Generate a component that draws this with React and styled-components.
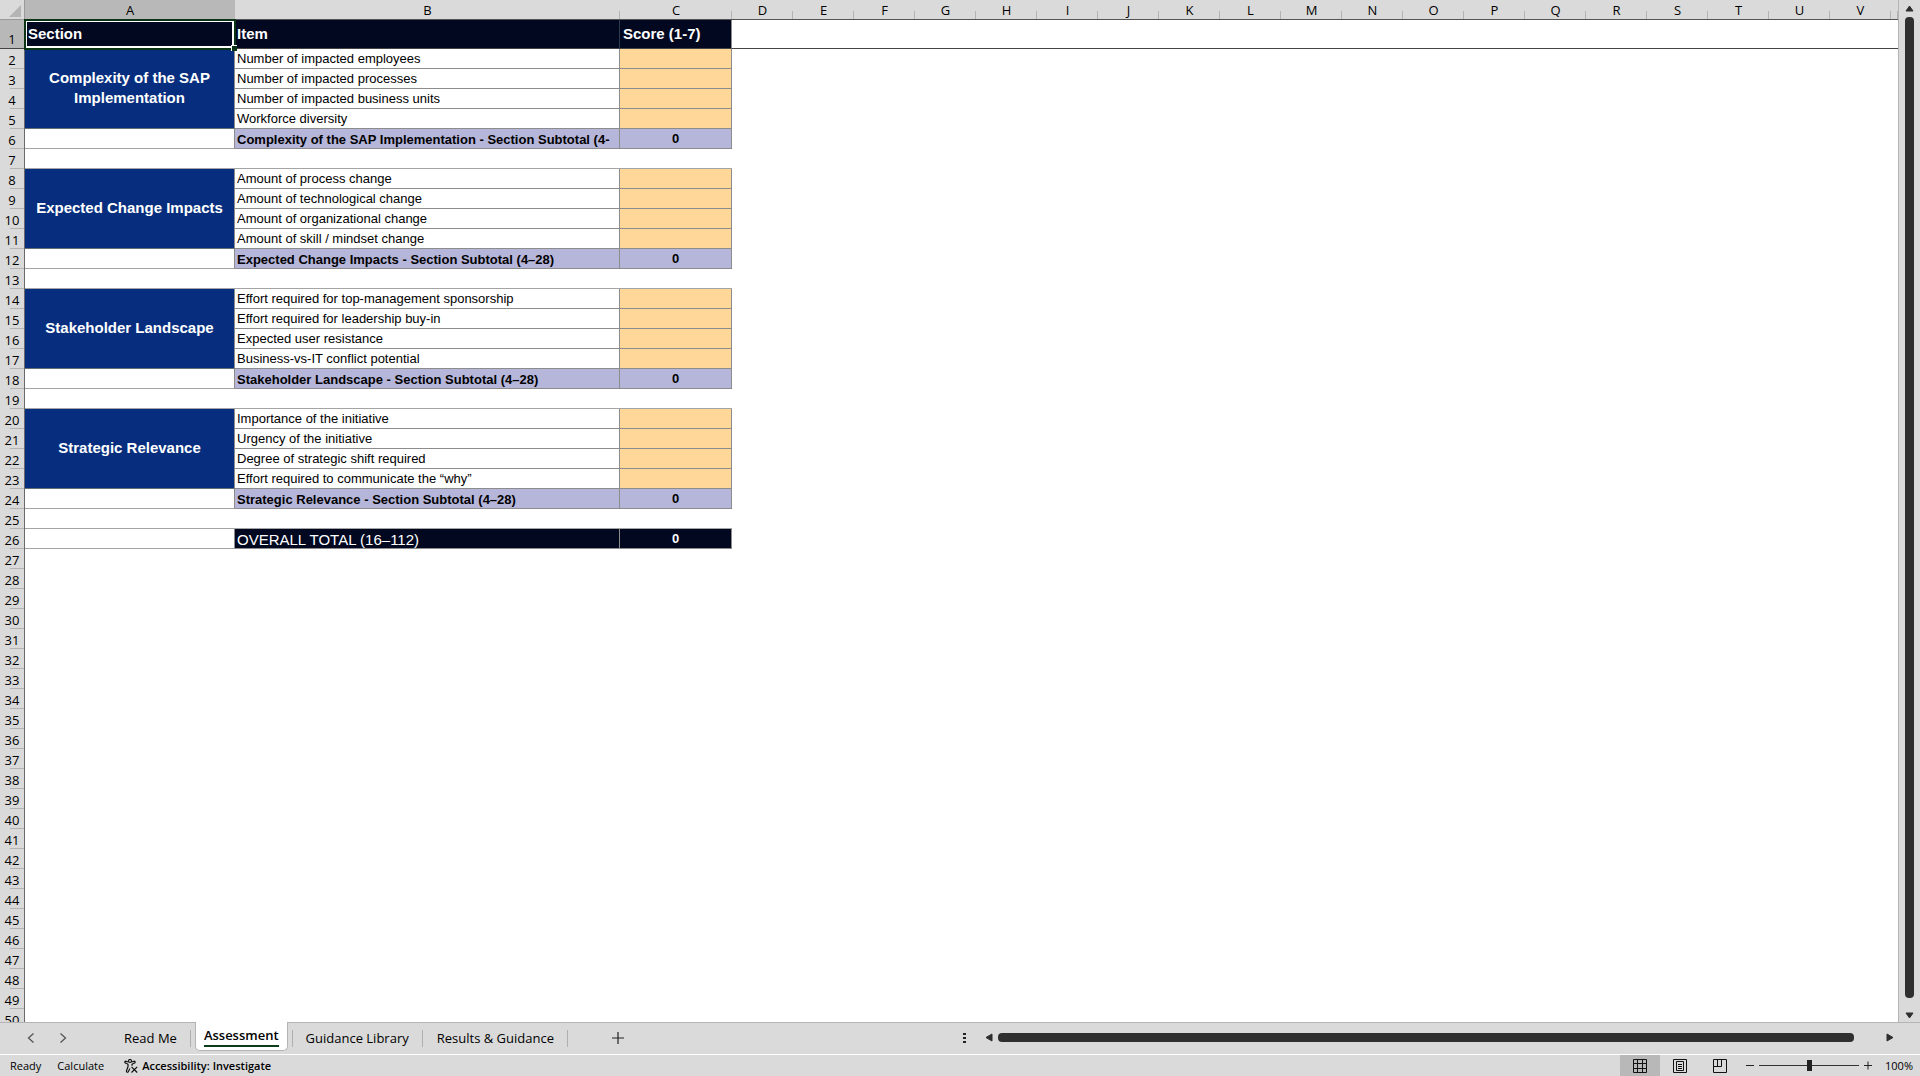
import React from "react";
import styled, { createGlobalStyle, css } from "styled-components";

const GlobalStyle = createGlobalStyle`
  * {
    box-sizing: border-box;
  }

  body {
    margin: 0;
    background: #dadada;
    color: #000;
    font-family: "Open Sans", "Noto Sans", sans-serif;
  }

  button {
    border: 0;
    padding: 0;
    background: none;
    color: inherit;
    font-family: inherit;
    display: flex;
    align-items: center;
    justify-content: center;
    cursor: pointer;
  }
`;

const Workbook = styled.div`
  display: flex;
  flex-direction: column;
  height: 100vh;
  overflow: hidden;
`;

const SheetArea = styled.div`
  display: flex;
  flex: 1;
  min-height: 0;
  border-bottom: 1px solid #b4b4b4;
`;

const SheetView = styled.main`
  flex: 1;
  min-width: 0;
  overflow: hidden;
  background: #fff;
  border-right: 1px solid #b4b4b4;
`;

const Sheet = styled.table`
  width: 100%;
  table-layout: fixed;
  border-collapse: separate;
  border-spacing: 0;
  font-family: "Liberation Sans", Arial, sans-serif;
  font-size: 13px;
  line-height: 17px;

  tr {
    height: 20px;
  }

  tr.first {
    height: 29px;
  }

  th,
  td {
    padding: 2px 0 0;
    overflow: hidden;
    white-space: nowrap;
    text-align: left;
  }
`;

const Col = styled.col`
  width: ${(p) => (p.$width ? `${p.$width}px` : "auto")};
`;

const headerFont = css`
  font-family: "Open Sans", "Noto Sans", sans-serif;
  font-size: 13px;
  font-weight: 500;
  color: #000;
`;

const Corner = styled.th`
  background: #dadada;
  border-bottom: 1px solid #9a9a9a;
  border-right: 1px solid #9a9a9a;

  svg {
    display: block;
    margin-left: 9px;
  }
`;

const ColHead = styled.th`
  && {
    ${headerFont}
    text-align: center;
  }
  background: ${(p) =>
    p.$active
      ? "#b8b8b8"
      : "linear-gradient(#b4b4b4, #b4b4b4) right bottom / 1px 8px no-repeat #dadada"};
  border-bottom: 1px solid #555;
`;

const RowHead = styled.th`
  && {
    ${headerFont}
    text-align: center;
  }
  vertical-align: bottom;
  background: ${(p) =>
    p.$active
      ? "#b8b8b8"
      : "linear-gradient(#b4b4b4, #b4b4b4) right bottom / 14px 1px no-repeat #dadada"};
  border-right: 1px solid #6a6a6a;
  ${(p) => p.$active && "border-bottom: 1px solid #444;"}
`;

const TitleCell = styled.td`
  background: #02081f;
  color: #fff;
  font-size: 15px;
  font-weight: 700;
  border-right: 1px solid ${(p) => (p.$last ? "#8c8c8c" : "#2c3c50")};
  border-bottom: 1px solid #444;

  && {
    padding: 0 0 2px ${(p) => (p.$last ? 3 : 2)}px;
  }
`;

const SelectedCell = styled(TitleCell)`
  position: relative;
  outline: 2px solid #0b3316;
  outline-offset: -1px;
  box-shadow: inset 0 0 0 2px #fff;

  && {
    overflow: visible;
    padding-left: 3px;
  }
`;

const FillHandle = styled.span`
  position: absolute;
  right: -3px;
  bottom: -3px;
  width: 6px;
  height: 6px;
  background: #0b3316;
  border-top: 1px solid #fff;
  border-left: 1px solid #fff;
`;

const FrozenEdge = styled.td`
  border-bottom: 1px solid #444;
`;

const SectionCell = styled.td`
  background: #072e7e;
  color: #fff;
  font-size: 15px;
  font-weight: 700;
  line-height: 20px;
  border-right: 1px solid #8c8c8c;
  border-bottom: 1px solid #5f6f72;

  &&& {
    padding: 0 8px 2px;
    text-align: center;
    white-space: normal;
  }
`;

const ItemCell = styled.td`
  color: #000;
  border-right: 1px solid #8c8c8c;
  border-bottom: 1px solid #8c8c8c;

  && {
    padding: 0 0 0 2px;
  }
`;

const ScoreCell = styled.td`
  background: #ffd899;
  border-right: 1px solid #8c8c8c;
  border-bottom: 1px solid #8c8c8c;
`;

const SubtotalCell = styled(ItemCell)`
  background: #b6b6da;
  font-weight: 700;

  && {
    padding: ${(p) => (p.$center ? "0" : "2px 0 0 2px")};
    text-align: ${(p) => (p.$center ? "center" : "left")};
  }
`;

const TotalCell = styled(SubtotalCell)`
  background: #02081f;
  color: #fff;
  font-size: ${(p) => (p.$center ? 13 : 15)}px;
  font-weight: ${(p) => (p.$center ? 700 : 400)};
`;

const SideCell = styled.td`
  border-right: 1px solid #8c8c8c;
  border-bottom: 1px solid #a4a4a4;
`;

const GapCell = styled.td`
  border-bottom: 1px solid #a4a4a4;
`;

const VerticalBar = styled.div`
  display: flex;
  flex-direction: column;
  align-items: center;
  width: 21px;
  padding: 5px 0 3px;
`;

const VerticalThumb = styled.div`
  flex: 1;
  width: 9px;
  margin: 5px 0 14px;
  border-radius: 4px;
  background: #2f2f2f;
`;

const TabStrip = styled.nav`
  display: flex;
  align-items: flex-start;
  height: 31px;
`;

const SheetNav = styled.div`
  display: flex;
  gap: 12px;
  width: 110px;
  padding-left: 21px;

  button {
    width: 20px;
    height: 30px;
  }
`;

const separator = "linear-gradient(#b0b0b0, #b0b0b0)";

const Tab = styled.button`
  height: 29px;
  padding: 0 14px;
  font-size: 13px;
  background: ${(p) => p.$divided && `${separator} left 7px / 1px 17px no-repeat,`}
    ${separator} right 7px / 1px 17px no-repeat;
`;

const ActiveTab = styled.button`
  height: 29px;
  margin: -1px 4px 0;
  padding: 0 8px;
  background: #fff;
  border: 1px solid #b4b4b4;
  border-top: 0;
  border-radius: 0 0 5px 5px;
  font-size: 13px;
  font-weight: 600;

  span {
    line-height: 19px;
    border-bottom: 2px solid #0b3d18;
  }
`;

const AddSheet = styled.button`
  width: 30px;
  height: 29px;
  margin-left: 35px;
`;

const HorizontalBar = styled.div`
  display: flex;
  align-items: center;
  width: 50%;
  height: 29px;
  margin-left: auto;
  padding: 0 26px 0 3px;
`;

const HorizontalThumb = styled.div`
  flex: 1;
  height: 9px;
  margin: 0 32px 0 5px;
  border-radius: 4px;
  background: #2f2f2f;
`;

const Grip = styled.span`
  display: flex;
  flex-direction: column;
  gap: 2px;
  width: 22px;

  i {
    width: 3px;
    height: 2px;
    background: #222;
  }
`;

const StatusBar = styled.footer`
  display: flex;
  align-items: center;
  height: 22px;
  border-top: 1px solid #fff;
  padding: 0 7px 0 10px;
  font-size: 11px;
`;

const StatusText = styled.span`
  margin-right: 16px;
`;

const AccessButton = styled.button`
  gap: 4px;
  margin-left: 4px;
  font-size: 11px;
  font-weight: 600;
`;

const Views = styled.div`
  display: flex;
  align-self: stretch;
  margin-left: auto;
`;

const ViewButton = styled.button`
  width: 40px;
  ${(p) => p.$active && "background: #b8b8b8;"}
`;

const Zoom = styled.div`
  display: flex;
  align-items: center;
  gap: 5px;
  margin-left: 6px;

  output {
    margin-left: 8px;
  }
`;

const Slider = styled.input`
  appearance: none;
  width: 100px;
  height: 11px;
  margin: 0;
  background: linear-gradient(#333, #333) center / 100% 1px no-repeat;

  &::-webkit-slider-thumb {
    appearance: none;
    width: 5px;
    height: 11px;
    background: #222;
  }
`;

const sections = [
  {
    name: "Complexity of the SAP Implementation",
    range: "(4-",
    items: [
      "Number of impacted employees",
      "Number of impacted processes",
      "Number of impacted business units",
      "Workforce diversity",
    ],
  },
  {
    name: "Expected Change Impacts",
    range: "(4–28)",
    items: [
      "Amount of process change",
      "Amount of technological change",
      "Amount of organizational change",
      "Amount of skill / mindset change",
    ],
  },
  {
    name: "Stakeholder Landscape",
    range: "(4–28)",
    items: [
      "Effort required for top-management sponsorship",
      "Effort required for leadership buy-in",
      "Expected user resistance",
      "Business-vs-IT conflict potential",
    ],
  },
  {
    name: "Strategic Relevance",
    range: "(4–28)",
    items: [
      "Importance of the initiative",
      "Urgency of the initiative",
      "Degree of strategic shift required",
      "Effort required to communicate the “why”",
    ],
  },
];

const columns = "ABCDEFGHIJKLMNOPQRSTUV".split("");
const widths = { A: 210, B: 385, C: 112 };
const emptyRows = Array.from({ length: 24 }, (_, i) => i + 27);

const Arrow = ({ d, w, h }) => (
  <svg width={w} height={h} viewBox={`0 0 ${w} ${h}`}>
    <path d={d} fill="#2f2f2f" stroke="#2f2f2f" strokeLinejoin="round" />
  </svg>
);

const Section = ({ section, start }) => (
  <>
    {section.items.map((item, i) => (
      <tr key={item}>
        <RowHead scope="row">{start + i}</RowHead>
        {i === 0 && <SectionCell rowSpan={4}>{section.name}</SectionCell>}
        <ItemCell>{item}</ItemCell>
        <ScoreCell />
      </tr>
    ))}
    <tr>
      <RowHead scope="row">{start + 4}</RowHead>
      <SideCell />
      <SubtotalCell>
        {section.name} - Section Subtotal {section.range}
      </SubtotalCell>
      <SubtotalCell $center>0</SubtotalCell>
    </tr>
    <tr>
      <RowHead scope="row">{start + 5}</RowHead>
      <GapCell colSpan={3} />
    </tr>
  </>
);

const App = () => {
  return (
    <>
      <GlobalStyle />
      <Workbook>
        <SheetArea>
          <SheetView>
            <Sheet>
              <colgroup>
                <Col $width={25} />
                {columns.map((c) => (
                  <Col key={c} $width={widths[c] || 61} />
                ))}
                <Col />
              </colgroup>
              <thead>
                <tr>
                  <Corner aria-label="Select all">
                    <svg width="12" height="12" viewBox="0 0 12 12">
                      <path d="M12 0v12H0z" fill="#b4b4b4" />
                    </svg>
                  </Corner>
                  {columns.map((c) => (
                    <ColHead key={c} scope="col" $active={c === "A"}>
                      {c}
                    </ColHead>
                  ))}
                  <ColHead />
                </tr>
              </thead>
              <tbody>
                <tr className="first">
                  <RowHead scope="row" $active>
                    1
                  </RowHead>
                  <SelectedCell>
                    Section
                    <FillHandle />
                  </SelectedCell>
                  <TitleCell>Item</TitleCell>
                  <TitleCell $last>Score (1-7)</TitleCell>
                  <FrozenEdge colSpan={20} />
                </tr>
                {sections.map((s, i) => (
                  <Section key={s.name} section={s} start={2 + i * 6} />
                ))}
                <tr>
                  <RowHead scope="row">26</RowHead>
                  <SideCell />
                  <TotalCell>OVERALL TOTAL (16–112)</TotalCell>
                  <TotalCell $center>0</TotalCell>
                </tr>
                {emptyRows.map((n) => (
                  <tr key={n}>
                    <RowHead scope="row">{n}</RowHead>
                  </tr>
                ))}
              </tbody>
            </Sheet>
          </SheetView>
          <VerticalBar>
            <button aria-label="Scroll up">
              <Arrow w={9} h={7} d="M4.5 1L8 6H1z" />
            </button>
            <VerticalThumb />
            <button aria-label="Scroll down">
              <Arrow w={9} h={7} d="M4.5 6L8 1H1z" />
            </button>
          </VerticalBar>
        </SheetArea>

        <TabStrip>
          <SheetNav>
            <button aria-label="Previous sheet">
              <svg width="8" height="10" viewBox="0 0 8 10">
                <path d="M6.500.5L1.500 5l5 4.500" fill="none" stroke="#555" strokeWidth="1.3" />
              </svg>
            </button>
            <button aria-label="Next sheet">
              <svg width="8" height="10" viewBox="0 0 8 10">
                <path d="M1.500.5l5 4.500-5 4.500" fill="none" stroke="#555" strokeWidth="1.3" />
              </svg>
            </button>
          </SheetNav>
          <Tab>Read Me</Tab>
          <ActiveTab>
            <span>Assessment</span>
          </ActiveTab>
          <Tab $divided>Guidance Library</Tab>
          <Tab>Results &amp; Guidance</Tab>
          <AddSheet aria-label="New sheet">
            <svg width="12" height="12" viewBox="0 0 12 12">
              <path d="M6 0v12M0 6h12" stroke="#222" strokeWidth="1.2" />
            </svg>
          </AddSheet>
          <HorizontalBar>
            <Grip>
              <i />
              <i />
              <i />
            </Grip>
            <button aria-label="Scroll left">
              <Arrow w={8} h={9} d="M1 4.5L7 1v7z" />
            </button>
            <HorizontalThumb />
            <button aria-label="Scroll right">
              <Arrow w={8} h={9} d="M7 4.5L1 1v7z" />
            </button>
          </HorizontalBar>
        </TabStrip>

        <StatusBar>
          <StatusText>Ready</StatusText>
          <StatusText>Calculate</StatusText>
          <AccessButton>
            <svg width="14" height="14" viewBox="0 0 14 14">
              <g fill="none" stroke="#111" strokeWidth="1.2" strokeLinejoin="round">
                <circle cx="6" cy="2" r="1.5" />
                <path d="M4.500 3L2 2.200Q.4 2.300 1 3.800L4 5.200v2.600L2.400 12q.2 1.800 1.700 1L6 9.500" />
                <path d="M7.500 3L10 2.200q1.600.1 1 1.600L8 5.200v1.600" />
                <path d="M7.500 7.800l5.700 5.700M13.200 7.800l-5.700 5.700" />
              </g>
            </svg>
            Accessibility: Investigate
          </AccessButton>
          <Views>
            <ViewButton $active aria-label="Normal">
              <svg width="14" height="14" viewBox="0 0 14 14">
                <path
                  d="M.5.5h13v13H.5zM4.500 0v14M9.500 0v14M0 4.500h14M0 9.500h14"
                  fill="none"
                  stroke="#111"
                />
              </svg>
            </ViewButton>
            <ViewButton aria-label="Page Layout">
              <svg width="14" height="14" viewBox="0 0 14 14">
                <path
                  d="M.5.5h13v13H.5zM3.500 2.500h7v9h-7zM5 5.500h4M5 7.500h4M5 9.500h4"
                  fill="none"
                  stroke="#111"
                />
              </svg>
            </ViewButton>
            <ViewButton aria-label="Page Break Preview">
              <svg width="14" height="14" viewBox="0 0 14 14">
                <path
                  d="M.5.5h13v13H.5zM.5 7.500h8v-7M4.500.5v7"
                  fill="none"
                  stroke="#111"
                />
              </svg>
            </ViewButton>
          </Views>
          <Zoom>
            <button aria-label="Zoom out">
              <svg width="8" height="9" viewBox="0 0 8 9">
                <path d="M0 4.500h8" stroke="#222" />
              </svg>
            </button>
            <Slider
              type="range"
              min="0"
              max="200"
              defaultValue="100"
              aria-label="Zoom"
            />
            <button aria-label="Zoom in">
              <svg width="8" height="9" viewBox="0 0 8 9">
                <path d="M0 4.500h8M4 .5v8" stroke="#222" />
              </svg>
            </button>
            <output>100%</output>
          </Zoom>
        </StatusBar>
      </Workbook>
    </>
  );
};
export default App;
